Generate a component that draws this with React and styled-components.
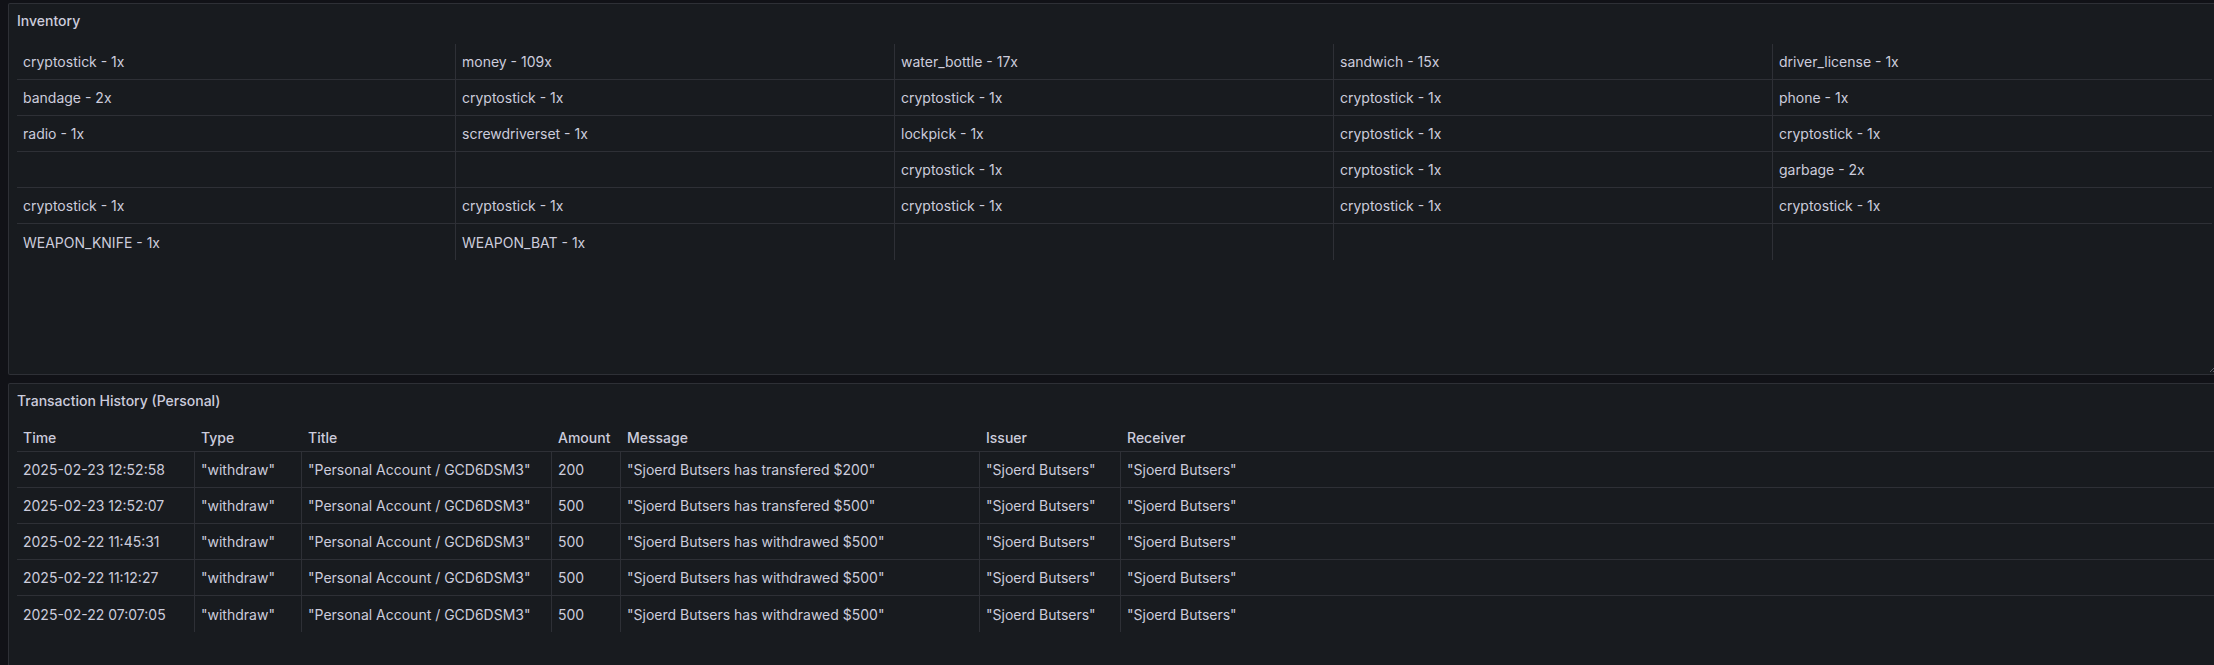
import React from 'react';
import styled, { createGlobalStyle } from 'styled-components';

const GlobalStyle = createGlobalStyle`
    html, body {
        margin: 0;
        padding: 0;
        background: #111217;
        overflow: hidden;
    }
    body {
        font-family: Inter, "Noto Sans", "Liberation Sans", sans-serif;
        color: #ccccdc;
        font-size: 14px;
    }
    * {
        box-sizing: border-box;
    }
`;

const Page = styled.div`
    width: 2214px;
    height: 665px;
    padding: 3px 0 0 8px;
    display: flex;
    flex-direction: column;
    gap: 8px;
    overflow: hidden;
`;

const Panel = styled.section`
    position: relative;
    width: calc(100% + 8px);
    height: ${({ height }) => height}px;
    flex-shrink: 0;
    background: #181b1f;
    border: 1px solid rgba(204, 204, 220, 0.12);
    border-radius: 2px;
    display: flex;
    flex-direction: column;
    overflow: hidden;
`;

const PanelHeader = styled.header`
    height: 32px;
    padding: 0 8px;
    display: flex;
    align-items: center;
    flex-shrink: 0;
`;

const PanelTitle = styled.h2`
    margin: 0;
    font-size: 14px;
    font-weight: 500;
    color: #ccccdc;
    letter-spacing: 0;
`;

const PanelBody = styled.div`
    padding: ${({ top }) => top}px 0 0 8px;
    flex: 1;
    overflow: hidden;
`;

const Grid = styled.div`
    display: grid;
    grid-template-columns: ${({ columns }) => columns};
`;

const Cell = styled.div`
    height: 36px;
    padding: 0 6px;
    display: flex;
    align-items: center;
    white-space: nowrap;
    overflow: hidden;
    font-size: 14px;
    color: #ccccdc;
    border-right: ${({ last }) => (last ? 'none' : '1px solid rgba(204, 204, 220, 0.12)')};
    border-bottom: ${({ bottom }) => (bottom ? '1px solid rgba(204, 204, 220, 0.12)' : 'none')};
`;

const HeadCell = styled.div`
    height: 36px;
    padding: 14px 6px 0;
    line-height: 16px;
    white-space: nowrap;
    font-size: 14px;
    font-weight: 500;
    color: #ccccdc;
    border-bottom: 1px solid rgba(204, 204, 220, 0.12);
`;

const ResizeHandle = styled.svg`
    position: absolute;
    right: 4px;
    bottom: 1px;
    width: 8px;
    height: 8px;
`;

const inventory = [
    ['cryptostick - 1x', 'money - 109x', 'water_bottle - 17x', 'sandwich - 15x', 'driver_license - 1x'],
    ['bandage - 2x', 'cryptostick - 1x', 'cryptostick - 1x', 'cryptostick - 1x', 'phone - 1x'],
    ['radio - 1x', 'screwdriverset - 1x', 'lockpick - 1x', 'cryptostick - 1x', 'cryptostick - 1x'],
    ['', '', 'cryptostick - 1x', 'cryptostick - 1x', 'garbage - 2x'],
    ['cryptostick - 1x', 'cryptostick - 1x', 'cryptostick - 1x', 'cryptostick - 1x', 'cryptostick - 1x'],
    ['WEAPON_KNIFE - 1x', 'WEAPON_BAT - 1x', '', '', ''],
];

const columns = ['Time', 'Type', 'Title', 'Amount', 'Message', 'Issuer', 'Receiver'];

const tx = (time, amount, verb) => [
    time,
    '"withdraw"',
    '"Personal Account / GCD6DSM3"',
    amount,
    `"Sjoerd Butsers has ${verb} $${amount}"`,
    '"Sjoerd Butsers"',
    '"Sjoerd Butsers"',
];

const transactions = [
    tx('2025-02-23 12:52:58', '200', 'transfered'),
    tx('2025-02-23 12:52:07', '500', 'transfered'),
    tx('2025-02-22 11:45:31', '500', 'withdrawed'),
    tx('2025-02-22 11:12:27', '500', 'withdrawed'),
    tx('2025-02-22 07:07:05', '500', 'withdrawed'),
];

const App = () => {
    return (
        <Page>
            <GlobalStyle />
            <Panel height={372}>
                <PanelHeader>
                    <PanelTitle>Inventory</PanelTitle>
                </PanelHeader>
                <PanelBody top={8}>
                    <Grid columns="repeat(5, 439px)">
                        {inventory.map((row, r) =>
                            row.map((item, c) => (
                                <Cell
                                    key={`${r}-${c}`}
                                    last={c === row.length - 1}
                                    bottom={r < inventory.length - 1}
                                >
                                    {item}
                                </Cell>
                            ))
                        )}
                    </Grid>
                </PanelBody>
                <ResizeHandle viewBox="0 0 8 8">
                    <path d="M7 1 L1 7 M7 4 L4 7" stroke="#5a5d66" strokeWidth="1" fill="none" />
                </ResizeHandle>
            </Panel>
            <Panel height={300}>
                <PanelHeader>
                    <PanelTitle>Transaction History (Personal)</PanelTitle>
                </PanelHeader>
                <PanelBody top={0}>
                    <Grid columns="178px 107px 250px 69px 359px 141px 1fr">
                        {columns.map((name) => (
                            <HeadCell key={name}>{name}</HeadCell>
                        ))}
                        {transactions.map((row, r) =>
                            row.map((value, c) => (
                                <Cell
                                    key={`${r}-${c}`}
                                    last={c === row.length - 1}
                                    bottom={r < transactions.length - 1}
                                >
                                    {value}
                                </Cell>
                            ))
                        )}
                    </Grid>
                </PanelBody>
            </Panel>
        </Page>
    );
};

export default App;
